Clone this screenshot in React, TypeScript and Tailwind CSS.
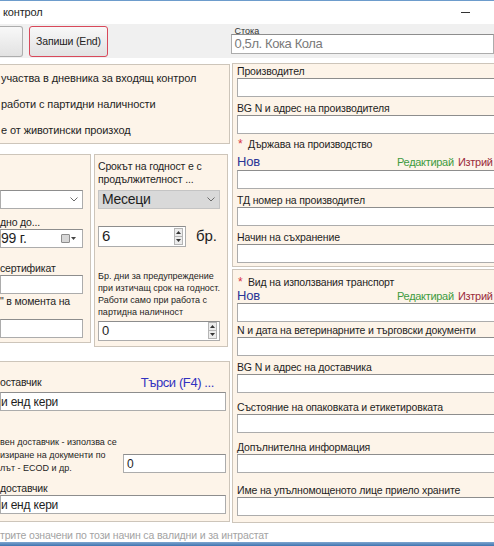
import React from "react";

type P = { className?: string; children?: React.ReactNode };

function Box({ className = "", children }: P) {
  return (
    <div className={`border border-[#acacac] border-t-[#8d8d8d] bg-white flex items-center ${className}`}>
      {children}
    </div>
  );
}

function Label({ className = "", children }: P) {
  return (
    <div className={`h-[14px] leading-[14px] text-[#1e1e1e] whitespace-nowrap ${className}`}>
      {children}
    </div>
  );
}

function Field({ label, className = "" }: { label: string; className?: string }) {
  return (
    <div className={className}>
      <Label>{label}</Label>
      <Box className="h-[19px] w-[270px]" />
    </div>
  );
}

function Chevron() {
  return (
    <svg width="8" height="5" viewBox="0 0 8 5">
      <polyline points="0.5,0.5 4,4 7.5,0.5" fill="none" stroke="#6b6b6b" strokeWidth="1" />
    </svg>
  );
}

function Spin() {
  return (
    <div className="w-[9px] h-[17px] flex flex-col border border-[#b5b5b5] bg-[#ececec]">
      <div className="flex-1 flex items-center justify-center">
        <svg width="5" height="3" viewBox="0 0 5 3"><polygon points="0,3 2.5,0 5,3" fill="#333" /></svg>
      </div>
      <div className="h-[1px] bg-[#b5b5b5]" />
      <div className="flex-1 flex items-center justify-center">
        <svg width="5" height="3" viewBox="0 0 5 3"><polygon points="0,0 2.5,3 5,0" fill="#333" /></svg>
      </div>
    </div>
  );
}

function Lookup({ label, className = "", rowClass = "" }: { label: string; className?: string; rowClass?: string }) {
  return (
    <div className={className}>
      <div className="h-[14px] leading-[14px] text-[#1e1e1e] flex whitespace-nowrap">
        <span className="w-[11px] pl-[1px] text-[#d8333f] text-[12px]">*</span>
        <span>{label}</span>
      </div>
      <div className={`flex items-center whitespace-nowrap ${rowClass}`}>
        <span className="w-[160px] text-[13px] tracking-[-0.2px] text-[#2a3596]">Нов</span>
        <span className="w-[61px] text-[11px] tracking-[-0.3px] text-[#3f9b3f]">Редактирай</span>
        <span className="text-[11px] tracking-[-0.3px] text-[#9a2b3b]">Изтрий</span>
      </div>
      <Box className="h-[19px] w-[270px]" />
    </div>
  );
}

export default function App() {
  return (
    <div className="w-[494px] h-[546px] overflow-hidden bg-white flex flex-col font-['Liberation_Sans',Arial,sans-serif] text-[10.5px] tracking-[-0.15px] text-[#1e1e1e]">
      {/* title */}
      <div className="h-[1px] bg-[#6d9ccc]" />
      <div className="h-[23px] flex items-center justify-between">
        <span className="pl-[3px] text-[11px]">контрол</span>
        <div className="w-[9px] h-[1px] bg-[#333] mr-[24px]" />
      </div>

      {/* toolbar */}
      <div className="h-[34px] bg-[#f0f0f0] flex items-start pt-[2px]">
        <div className="w-[24px] h-[31px] border border-l-0 border-[#adadad] rounded-r-[3px] bg-linear-to-b from-[#f8f8f8] to-[#e2e2e2]" />
        <div className="ml-[6px] w-[80px] h-[31px] border border-[#d8485a] rounded-[3px] bg-linear-to-b from-[#f8f8f8] to-[#e2e2e2] flex items-center justify-center text-[10.5px] whitespace-nowrap text-[#222]">
          Запиши (End)
        </div>
        <div className="ml-[123px] w-[270px]">
          <div className="h-[10px] leading-[10px] text-[9px] tracking-normal pl-[4px] text-[#333]">Стока</div>
          <Box className="mt-[-2px] h-[20px] pl-[3px] text-[13px] tracking-[-0.4px] text-[#7a7a7a] whitespace-nowrap">0,5л. Кока Кола</Box>
        </div>
      </div>

      {/* main */}
      <div className="flex">
        {/* left column */}
        <div className="w-[230px] shrink-0">
          <div className="mt-[6px] h-[80px] bg-[#fdf4e9] border-y border-r border-[#cdc5ba] text-[11px] tracking-[-0.1px] whitespace-nowrap">
            <div className="h-[26px] leading-[26px] pl-[1px]">участва в дневника за входящ контрол</div>
            <div className="h-[26px] leading-[26px] pl-[1px]">работи с партидни наличности</div>
            <div className="h-[26px] leading-[26px] pl-[1px]">е от животински произход</div>
          </div>

          <div className="mt-[10px] flex items-start">
            {/* left sub panel */}
            <div className="w-[91px] h-[189px] bg-[#fdf4e9] border-y border-r border-[#cdc5ba]">
              <Box className="mt-[35px] w-[83px] h-[19px] border-[#7eb4ea] justify-end pr-[4px]">
                <Chevron />
              </Box>
              <Label className="mt-[6px]">дно до...</Label>
              <Box className="w-[83px] h-[19px] border-[#7a7a7a] justify-between pr-[6px] text-[14px] tracking-[-0.2px]">
                <span>99 г.</span>
                <span className="flex items-center gap-[1px]">
                  <span className="w-[9px] h-[9px] border border-[#8d8d8d] bg-[#d7d7d7] rounded-[1px]" />
                  <svg width="5" height="3" viewBox="0 0 5 3"><polygon points="0,0 2.5,3 5,0" fill="#444" /></svg>
                </span>
              </Box>
              <Label className="mt-[13px]">сертификат</Label>
              <Box className="w-[83px] h-[19px]" />
              <Label>" в момента на</Label>
              <Box className="mt-[11px] w-[83px] h-[19px]" />
            </div>

            {/* middle panel */}
            <div className="ml-[3px] w-[134px] h-[193px] bg-[#fdf4e9] border border-[#cdc5ba] pl-[3px]">
              <div className="mt-[5px] leading-[13px] whitespace-nowrap">
                <div>Срокът на годност е с</div>
                <div>продължителност ...</div>
              </div>
              <div className="mt-[4px] w-[122px] h-[19px] bg-[#d9d9d9] border border-[#c4c4c4] flex items-center justify-between pl-[3px] pr-[4px] text-[14px] tracking-[-0.3px]">
                <span>Месеци</span>
                <Chevron />
              </div>
              <div className="mt-[16px] flex items-center">
                <Box className="w-[88px] h-[21px] justify-between pl-[3px] pr-[2px] text-[15px]">
                  <span>6</span>
                  <Spin />
                </Box>
                <span className="ml-[10px] text-[15px]">бр.</span>
              </div>
              <div className="mt-[22px] text-[9px] tracking-normal leading-[12px] whitespace-nowrap">
                <div>Бр. дни за предупреждение</div>
                <div>при изтичащ срок на годност.</div>
                <div>Работи само при работа с</div>
                <div>партидна наличност</div>
              </div>
              <Box className="mt-[3px] w-[122px] h-[20px] justify-between pl-[3px] pr-[2px] text-[13px]">
                <span>0</span>
                <Spin />
              </Box>
            </div>
          </div>

          {/* supplier panel */}
          <div className="mt-[14px] h-[161px] bg-[#fdf4e9] border-y border-r border-[#cdc5ba]">
            <div className="mt-[12px] h-[18px] flex items-center whitespace-nowrap">
              <span>оставчик</span>
              <span className="ml-auto mr-[15px] text-[13px] tracking-[-0.4px] text-[#3232c0]">Търси (F4) ...</span>
            </div>
            <Box className="w-[226px] h-[19px] text-[12px] tracking-[-0.2px]">и енд кери</Box>
            <div className="mt-[25px] flex items-start">
              <div className="w-[123px] text-[9px] tracking-normal leading-[13px] whitespace-nowrap">
                <div>вен доставчик - използва се</div>
                <div>изиране на документи по</div>
                <div>лът - ECOD и др.</div>
              </div>
              <Box className="mt-[18px] w-[103px] h-[19px] pl-[3px] text-[12px]">0</Box>
            </div>
            <Label className="mt-[6px]">доставчик</Label>
            <Box className="w-[226px] h-[19px] text-[12px] tracking-[-0.2px]">и енд кери</Box>
          </div>
        </div>

        {/* right column */}
        <div className="ml-[2px] w-[270px] shrink-0">
          <div className="mt-[5px] h-[204px] bg-[#fdf4e9] border border-[#cdc5ba] pl-[4px]">
            <Field label="Производител" />
            <Field label="BG N и адрес на производителя" className="mt-[4px]" />
            <Lookup label="Държава на производство" className="mt-[3px]" rowClass="h-[16px] mt-[3px]" />
            <Field label="ТД номер на производител" className="mt-[4px]" />
            <Field label="Начин на съхранение" className="mt-[4px]" />
          </div>
          <div className="mt-[2px] h-[254px] bg-[#fdf4e9] border border-[#cdc5ba] pl-[4px]">
            <Lookup label="Вид на използвания транспорт" className="mt-[5px]" rowClass="h-[14px]" />
            <Field label="N и дата на ветеринарните и търговски документи" className="mt-[1px]" />
            <Field label="BG N и адрес на доставчика" className="mt-[4px]" />
            <Field label="Състояние на опаковката и етикетировката" className="mt-[7px]" />
            <Field label="Допълнителна информация" className="mt-[7px]" />
            <Field label="Име на упълномощеното лице приело храните" className="mt-[10px]" />
          </div>
        </div>
      </div>

      <div className="mt-[5px] h-[14px] leading-[14px] text-[#a3a3a3] whitespace-nowrap">
        трите означени по този начин са валидни и за интрастат
      </div>
      <div className="mt-auto h-[4px] bg-linear-to-b from-[#7fa6cf] to-[#3e74b0]" />
    </div>
  );
}
